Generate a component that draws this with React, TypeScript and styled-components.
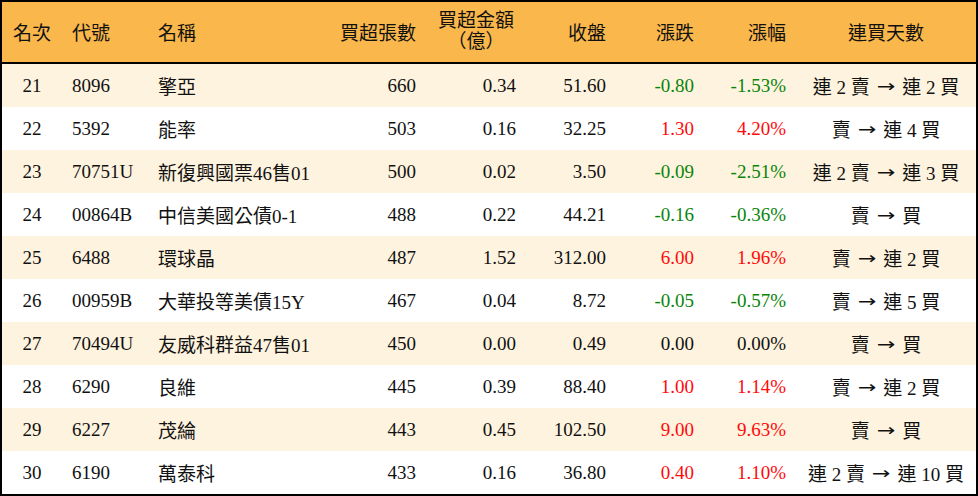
import React from "react";
import styled, { createGlobalStyle } from "styled-components";

const Global = createGlobalStyle`
  html, body { margin: 0; padding: 0; background: #ffffff; }
  * { box-sizing: border-box; }
`;

const COLS = "60px 86px 178px 100px 100px 90px 88px 92px 180px";

const Table = styled.div`
  width: 978px;
  border: 2px solid #000;
  font-family: "Liberation Serif", "Noto Sans CJK TC", serif;
  font-size: 19px;
  color: #111;
`;

const HeadRow = styled.div`
  display: grid;
  grid-template-columns: ${COLS};
  height: 62px;
  background: #fab74b;
  border-bottom: 2px solid #000;
`;

const Row = styled.div<{ $alt: boolean }>`
  display: grid;
  grid-template-columns: ${COLS};
  height: 43px;
  background: ${(p) => (p.$alt ? "#fef3de" : "#ffffff")};
`;

type Align = "left" | "center" | "right";

const Cell = styled.div<{ $align: Align; $color?: string }>`
  display: flex;
  align-items: center;
  justify-content: ${(p) =>
    p.$align === "left" ? "flex-start" : p.$align === "right" ? "flex-end" : "center"};
  padding: 0 10px;
  white-space: pre;
  color: ${(p) => p.$color || "#111"};
`;

const HeadCell = styled(Cell)`
  padding-bottom: 2px;
`;

const TwoLine = styled.div`
  display: flex;
  flex-direction: column;
  align-items: center;
  line-height: 21px;
`;

const Arrow = styled.span`
  font-family: "DejaVu Sans", sans-serif;
  font-size: 17px;
  display: inline-block;
  transform: scaleX(1.3);
  margin: 0 9px;
`;

const RED = "#ff0a0a";
const GREEN = "#0a850a";

type R = [string, string, string, string, string, string, string, string, [string, string]];

const rows: R[] = [
  ["21", "8096", "擎亞", "660", "0.34", "51.60", "-0.80", "-1.53%", ["連 2 賣", "連 2 買"]],
  ["22", "5392", "能率", "503", "0.16", "32.25", "1.30", "4.20%", ["賣", "連 4 買"]],
  ["23", "70751U", "新復興國票46售01", "500", "0.02", "3.50", "-0.09", "-2.51%", ["連 2 賣", "連 3 買"]],
  ["24", "00864B", "中信美國公債0-1", "488", "0.22", "44.21", "-0.16", "-0.36%", ["賣", "買"]],
  ["25", "6488", "環球晶", "487", "1.52", "312.00", "6.00", "1.96%", ["賣", "連 2 買"]],
  ["26", "00959B", "大華投等美債15Y", "467", "0.04", "8.72", "-0.05", "-0.57%", ["賣", "連 5 買"]],
  ["27", "70494U", "友威科群益47售01", "450", "0.00", "0.49", "0.00", "0.00%", ["賣", "買"]],
  ["28", "6290", "良維", "445", "0.39", "88.40", "1.00", "1.14%", ["賣", "連 2 買"]],
  ["29", "6227", "茂綸", "443", "0.45", "102.50", "9.00", "9.63%", ["賣", "買"]],
  ["30", "6190", "萬泰科", "433", "0.16", "36.80", "0.40", "1.10%", ["連 2 賣", "連 10 買"]],
];

const colorOf = (v: string) =>
  v.startsWith("-") ? GREEN : /^0\.00/.test(v) ? "#111" : RED;

export default function App() {
  return (
    <>
      <Global />
      <Table>
        <HeadRow>
          <HeadCell $align="center">名次</HeadCell>
          <HeadCell $align="left">代號</HeadCell>
          <HeadCell $align="left">名稱</HeadCell>
          <HeadCell $align="right">買超張數</HeadCell>
          <HeadCell $align="center">
            <TwoLine>
              <span>買超金額</span>
              <span>（億）</span>
            </TwoLine>
          </HeadCell>
          <HeadCell $align="right">收盤</HeadCell>
          <HeadCell $align="right">漲跌</HeadCell>
          <HeadCell $align="right">漲幅</HeadCell>
          <HeadCell $align="center">連買天數</HeadCell>
        </HeadRow>
        {rows.map((r, i) => (
          <Row key={r[0]} $alt={i % 2 === 0}>
            <Cell $align="center">{r[0]}</Cell>
            <Cell $align="left">{r[1]}</Cell>
            <Cell $align="left">{r[2]}</Cell>
            <Cell $align="right">{r[3]}</Cell>
            <Cell $align="right">{r[4]}</Cell>
            <Cell $align="right">{r[5]}</Cell>
            <Cell $align="right" $color={colorOf(r[6])}>{r[6]}</Cell>
            <Cell $align="right" $color={colorOf(r[7])}>{r[7]}</Cell>
            <Cell $align="center">
              {r[8][0]}<Arrow>→</Arrow>{r[8][1]}
            </Cell>
          </Row>
        ))}
      </Table>
    </>
  );
}
